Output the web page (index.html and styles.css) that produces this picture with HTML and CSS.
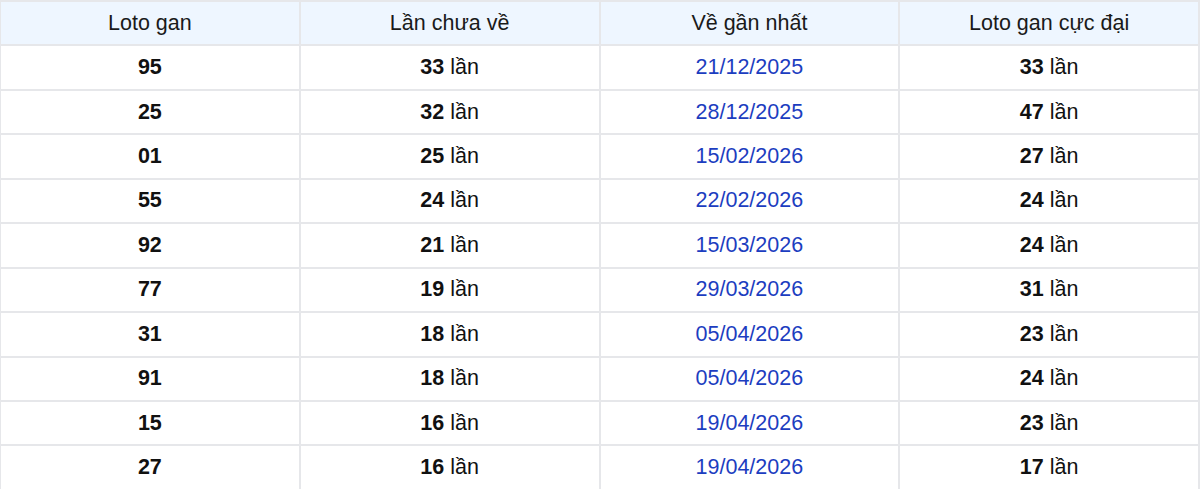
FILE: index.html
```html
<!DOCTYPE html>
<html lang="vi">
<head>
<meta charset="utf-8">
<link rel="stylesheet" href="styles.css">
</head>
<body>
<table class="gan-table">
  <thead>
    <tr><th>Loto gan</th><th>Lần chưa về</th><th>Về gần nhất</th><th>Loto gan cực đại</th></tr>
  </thead>
  <tbody>
    <tr><td><b>95</b></td><td><b>33</b> lần</td><td class="date">21/12/2025</td><td><b>33</b> lần</td></tr>
    <tr><td><b>25</b></td><td><b>32</b> lần</td><td class="date">28/12/2025</td><td><b>47</b> lần</td></tr>
    <tr><td><b>01</b></td><td><b>25</b> lần</td><td class="date">15/02/2026</td><td><b>27</b> lần</td></tr>
    <tr><td><b>55</b></td><td><b>24</b> lần</td><td class="date">22/02/2026</td><td><b>24</b> lần</td></tr>
    <tr><td><b>92</b></td><td><b>21</b> lần</td><td class="date">15/03/2026</td><td><b>24</b> lần</td></tr>
    <tr><td><b>77</b></td><td><b>19</b> lần</td><td class="date">29/03/2026</td><td><b>31</b> lần</td></tr>
    <tr><td><b>31</b></td><td><b>18</b> lần</td><td class="date">05/04/2026</td><td><b>23</b> lần</td></tr>
    <tr><td><b>91</b></td><td><b>18</b> lần</td><td class="date">05/04/2026</td><td><b>24</b> lần</td></tr>
    <tr><td><b>15</b></td><td><b>16</b> lần</td><td class="date">19/04/2026</td><td><b>23</b> lần</td></tr>
    <tr><td><b>27</b></td><td><b>16</b> lần</td><td class="date">19/04/2026</td><td><b>17</b> lần</td></tr>
  </tbody>
</table>
</body>
</html>
```
FILE: styles.css
```css
html, body {
  margin: 0;
  padding: 0;
  background: #ffffff;
}
body {
  font-family: "Liberation Sans", Arial, sans-serif;
  color: #111111;
  overflow: hidden;
}
.gan-table {
  width: 1201px;
  margin-left: -1px;
  border-collapse: collapse;
  table-layout: fixed;
  font-size: 21.5px;
}
.gan-table th,
.gan-table td {
  border: 2px solid #e6e7ea;
  text-align: center;
  vertical-align: middle;
  padding: 0;
  height: 42.45px;
}
.gan-table th {
  background: #eef6ff;
  font-weight: normal;
  color: #1a1a1a;
}
.gan-table td b {
  font-weight: bold;
  color: #111111;
}
.gan-table td.date {
  color: #1c3dc0;
}
```
